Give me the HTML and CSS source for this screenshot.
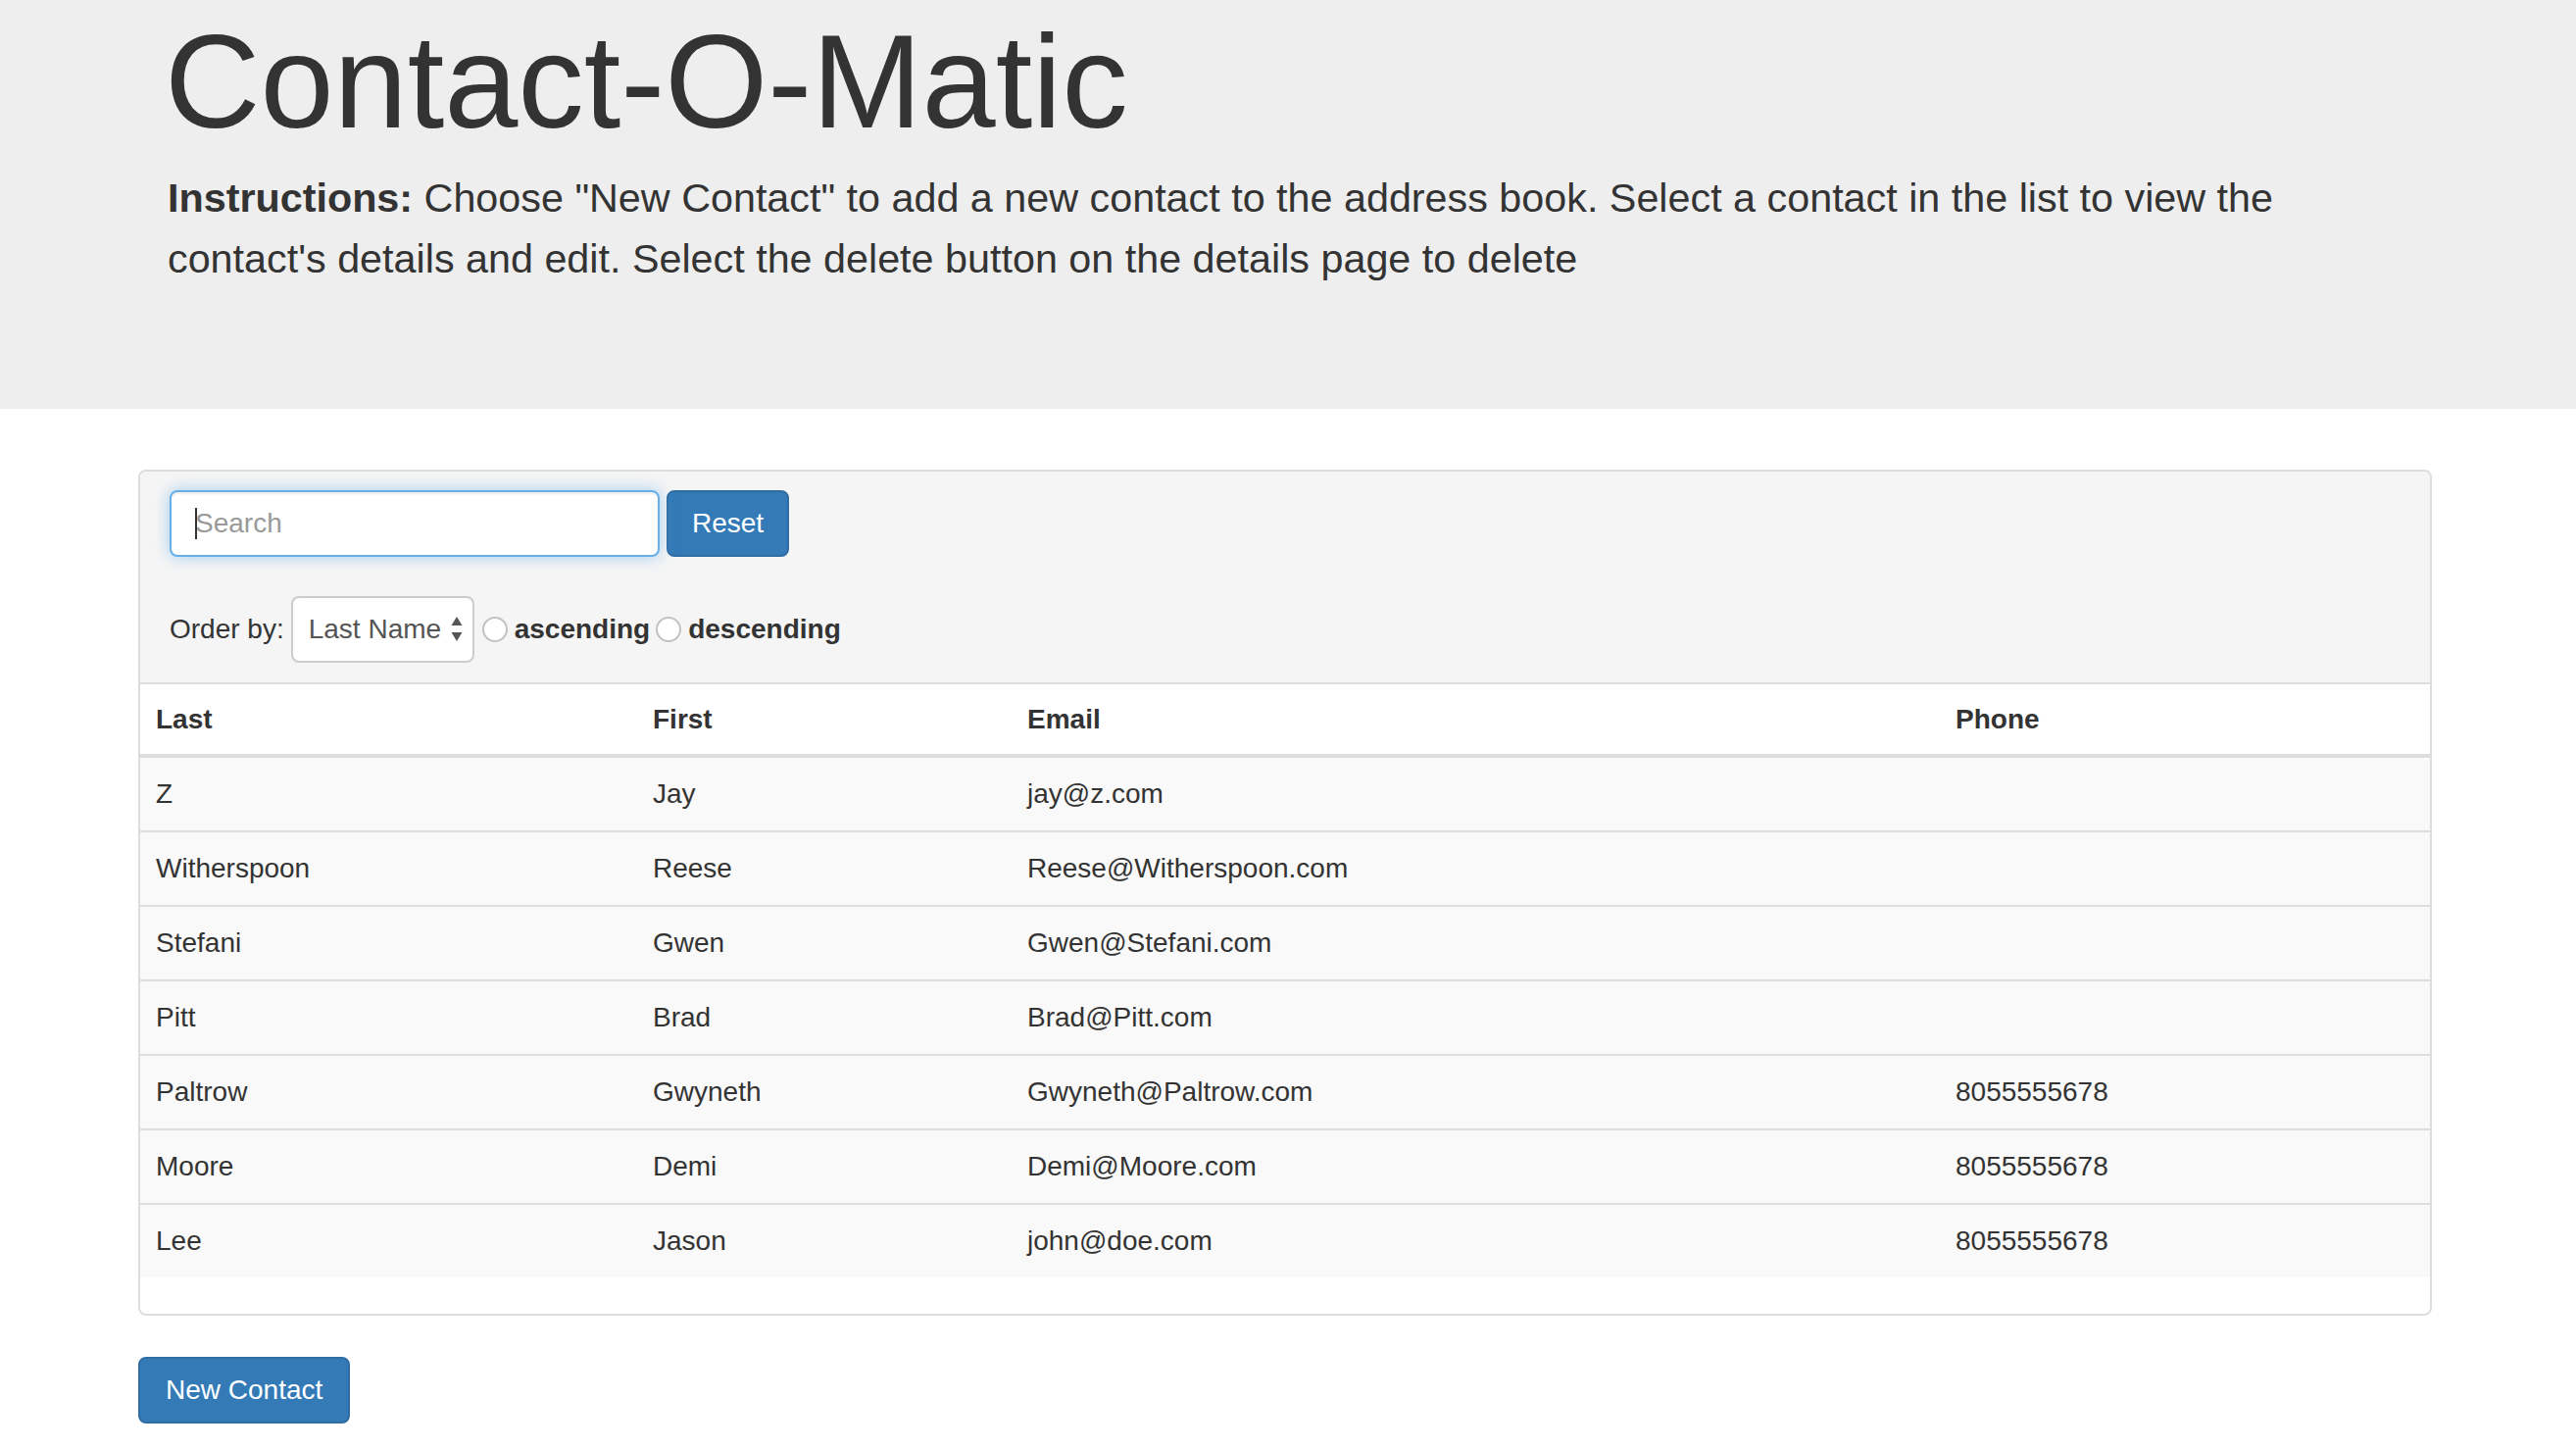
FILE: index.html
```html
<!DOCTYPE html>
<html lang="en">
<head>
<meta charset="utf-8">
<title>Contact-O-Matic</title>
<link rel="stylesheet" href="styles.css">
</head>
<body>
<header class="jumbotron">
  <div class="container jumbo-inner">
    <h1 class="title">Contact-O-Matic</h1>
    <p class="lead"><span class="line"><strong>Instructions:</strong> Choose "New Contact" to add a new contact to the address book. Select a contact in the list to view the</span> <span class="line">contact's details and edit. Select the delete button on the details page to delete</span></p>
  </div>
</header>

<main class="container">
  <section class="panel">
    <div class="panel-heading">
      <div class="search-row">
        <span class="search-wrap"><input class="search" type="text" placeholder="Search"></span>
        <button class="btn" type="button">Reset</button>
      </div>
      <div class="order-row">
        <span class="order-label">Order by:</span>
        <div class="select">
          <span>Last Name</span>
          <svg class="select-arrows" width="12" height="26" viewBox="0 0 12 26"><path d="M6 0 L11.5 9 L0.5 9 Z" fill="#555"/><path d="M6 25 L11.5 16 L0.5 16 Z" fill="#555"/></svg>
        </div>
        <span class="radio radio-first"></span><span class="radio-label">ascending</span>
        <span class="radio"></span><span class="radio-label">descending</span>
      </div>
    </div>
    <table class="table">
      <colgroup>
        <col class="c-last"><col class="c-first"><col class="c-email"><col class="c-phone">
      </colgroup>
      <thead>
        <tr><th>Last</th><th>First</th><th>Email</th><th>Phone</th></tr>
      </thead>
      <tbody>
        <tr><td>Z</td><td>Jay</td><td>jay@z.com</td><td></td></tr>
        <tr><td>Witherspoon</td><td>Reese</td><td>Reese@Witherspoon.com</td><td></td></tr>
        <tr><td>Stefani</td><td>Gwen</td><td>Gwen@Stefani.com</td><td></td></tr>
        <tr><td>Pitt</td><td>Brad</td><td>Brad@Pitt.com</td><td></td></tr>
        <tr><td>Paltrow</td><td>Gwyneth</td><td>Gwyneth@Paltrow.com</td><td>8055555678</td></tr>
        <tr><td>Moore</td><td>Demi</td><td>Demi@Moore.com</td><td>8055555678</td></tr>
        <tr><td>Lee</td><td>Jason</td><td>john@doe.com</td><td>8055555678</td></tr>
      </tbody>
    </table>
  </section>
  <button class="btn btn-new" type="button">New Contact</button>
</main>
</body>
</html>
```
FILE: styles.css
```css
* { box-sizing: border-box; }
html, body { margin: 0; padding: 0; background: #fff; }
body {
  font-family: "Liberation Sans", Arial, Helvetica, sans-serif;
  font-size: 28px;
  line-height: 40px;
  color: #333;
}
.container {
  width: 2340px;
  margin-left: 141px;
}
.jumbotron {
  background: #eee;
  padding: 10px 0 122px;
}
.jumbo-inner { padding: 0 30px; }
.title {
  margin: 0 0 0 -3px;
  font-size: 135px;
  line-height: 147px;
  font-weight: 500;
  color: #333;
}
.lead {
  margin: 14px 0 0;
  font-size: 41.3px;
  line-height: 62px;
  font-weight: 400;
}
.lead .line { display: block; white-space: nowrap; }
.lead strong { font-weight: 700; }

.panel {
  margin-top: 62px;
  border: 2px solid #ddd;
  border-radius: 8px;
  background: #fff;
  overflow: hidden;
}
.panel-heading {
  background: #f5f5f5;
  padding: 19px 30px 20px;
  border-bottom: 2px solid #ddd;
}
.search-row {
  display: flex;
  align-items: center;
  gap: 7px;
}
.search-wrap {
  position: relative;
  display: block;
  width: 500px;
  height: 68px;
}
.search-wrap::after {
  content: "";
  position: absolute;
  left: 26px;
  top: 18px;
  width: 2px;
  height: 32px;
  background: #333;
}
.search {
  display: block;
  width: 500px;
  height: 68px;
  margin: 0;
  padding: 0 24px;
  border: 2px solid #66afe9;
  border-radius: 8px;
  background: #fff;
  font-family: inherit;
  font-size: 28px;
  color: #555;
  outline: none;
  box-shadow: inset 0 2px 2px rgba(0,0,0,.075), 0 0 16px rgba(102,175,233,.6);
}
.search::placeholder { color: #999; opacity: 1; }
.btn {
  display: block;
  height: 68px;
  margin: 0;
  padding: 0 24px;
  border: 2px solid #2e6da4;
  border-radius: 8px;
  background: #337ab7;
  color: #fff;
  font-family: inherit;
  font-size: 28px;
  line-height: 40px;
}
.order-row {
  display: flex;
  align-items: center;
  margin-top: 40px;
}
.order-label { margin-right: 7px; }
.select {
  display: flex;
  align-items: center;
  justify-content: space-between;
  width: 187px;
  height: 68px;
  padding: 0 10px 0 16px;
  border: 2px solid #ccc;
  border-radius: 8px;
  background: #fff;
  color: #555;
}
.select-arrows { display: block; }
.radio {
  display: block;
  width: 26px;
  height: 26px;
  margin: 0 7px 0 6px;
  border: 2px solid #c2c2c2;
  border-radius: 50%;
  background: #fff;
}
.radio-first { margin-left: 8px; }
.radio-label { font-weight: 700; }

.table {
  width: 2336px;
  border-collapse: collapse;
  table-layout: fixed;
  margin-bottom: 37px;
}
.c-last { width: 507px; }
.c-first { width: 382px; }
.c-email { width: 947px; }
.c-phone { width: 500px; }
.table th {
  text-align: left;
  font-weight: 700;
  padding: 16px 16px 15px;
  border-bottom: 4px solid #ddd;
  background: #fff;
}
.table td {
  padding: 17px 16px;
  border-top: 2px solid #ddd;
  background: #f9f9f9;
  white-space: nowrap;
}
.table tbody tr:first-child td { border-top: 0; }
.btn-new { margin-top: 42px; padding: 0 26px; }
```
